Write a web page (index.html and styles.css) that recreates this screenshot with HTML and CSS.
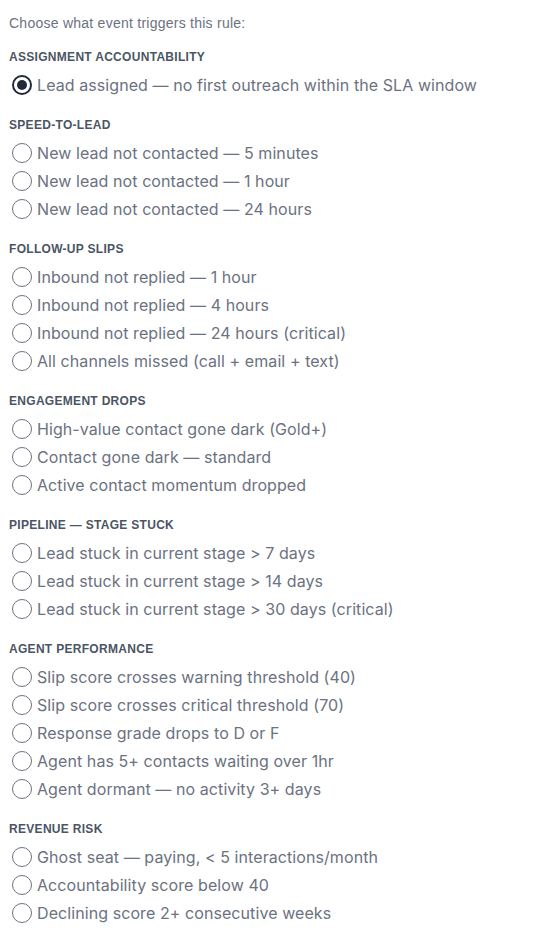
FILE: index.html
```html
<!DOCTYPE html>
<html lang="en">
<head>
  <meta charset="UTF-8">
  <title>Rule Trigger</title>
  <link rel="stylesheet" href="styles.css">
</head>
<body>

  <p class="intro">Choose what event triggers this rule:</p>

  <div class="group">
    <h3>Assignment Accountability</h3>
    <label class="option"><input type="radio" name="trigger" checked> Lead assigned — no first outreach within the SLA window</label>
  </div>

  <div class="group">
    <h3>Speed-to-Lead</h3>
    <label class="option"><input type="radio" name="trigger"> New lead not contacted — 5 minutes</label>
    <label class="option"><input type="radio" name="trigger"> New lead not contacted — 1 hour</label>
    <label class="option"><input type="radio" name="trigger"> New lead not contacted — 24 hours</label>
  </div>

  <div class="group">
    <h3>Follow-Up Slips</h3>
    <label class="option"><input type="radio" name="trigger"> Inbound not replied — 1 hour</label>
    <label class="option"><input type="radio" name="trigger"> Inbound not replied — 4 hours</label>
    <label class="option"><input type="radio" name="trigger"> Inbound not replied — 24 hours (critical)</label>
    <label class="option"><input type="radio" name="trigger"> All channels missed (call + email + text)</label>
  </div>

  <div class="group">
    <h3>Engagement Drops</h3>
    <label class="option"><input type="radio" name="trigger"> High-value contact gone dark (Gold+)</label>
    <label class="option"><input type="radio" name="trigger"> Contact gone dark — standard</label>
    <label class="option"><input type="radio" name="trigger"> Active contact momentum dropped</label>
  </div>

  <div class="group">
    <h3>Pipeline — Stage Stuck</h3>
    <label class="option"><input type="radio" name="trigger"> Lead stuck in current stage &gt; 7 days</label>
    <label class="option"><input type="radio" name="trigger"> Lead stuck in current stage &gt; 14 days</label>
    <label class="option"><input type="radio" name="trigger"> Lead stuck in current stage &gt; 30 days (critical)</label>
  </div>

  <div class="group">
    <h3>Agent Performance</h3>
    <label class="option"><input type="radio" name="trigger"> Slip score crosses warning threshold (40)</label>
    <label class="option"><input type="radio" name="trigger"> Slip score crosses critical threshold (70)</label>
    <label class="option"><input type="radio" name="trigger"> Response grade drops to D or F</label>
    <label class="option"><input type="radio" name="trigger"> Agent has 5+ contacts waiting over 1hr</label>
    <label class="option"><input type="radio" name="trigger"> Agent dormant — no activity 3+ days</label>
  </div>

  <div class="group">
    <h3>Revenue Risk</h3>
    <label class="option"><input type="radio" name="trigger"> Ghost seat — paying, &lt; 5 interactions/month</label>
    <label class="option"><input type="radio" name="trigger"> Accountability score below 40</label>
    <label class="option"><input type="radio" name="trigger"> Declining score 2+ consecutive weeks</label>
  </div>

</body>
</html>
```

FILE: styles.css
```css
body {
  font-family: "Liberation Sans", Arial, sans-serif;
  margin: 0;
  padding: 13px 9px 0;
  background: #fff;
  color: #6b7280;
}
.intro {
  margin: 0 0 16px;
  font-size: 14px;
  line-height: 20px;
  letter-spacing: 0.25px;
}
.group {
  margin-bottom: 18px;
}
.group h3 {
  margin: 0 0 6px;
  font-size: 12px;
  line-height: 16px;
  font-weight: 700;
  text-transform: uppercase;
  letter-spacing: 0.3px;
  color: #4b5563;
}
.option {
  display: flex;
  align-items: center;
  gap: 5px;
  height: 28px;
  font-family: Inter, "Noto Sans", Arial, sans-serif;
  font-size: 16px;
  letter-spacing: 0.08px;
  color: #6b7280;
  cursor: pointer;
}
.option input {
  appearance: none;
  width: 20px;
  height: 20px;
  margin: 0 0 0 3px;
  border: 1.5px solid #6b7280;
  border-radius: 50%;
  flex-shrink: 0;
  display: grid;
  place-items: center;
}
.option input:checked {
  border: 2px solid #1f2937;
}
.option input:checked::before {
  content: "";
  width: 10px;
  height: 10px;
  border-radius: 50%;
  background: #1f2937;
}
```
